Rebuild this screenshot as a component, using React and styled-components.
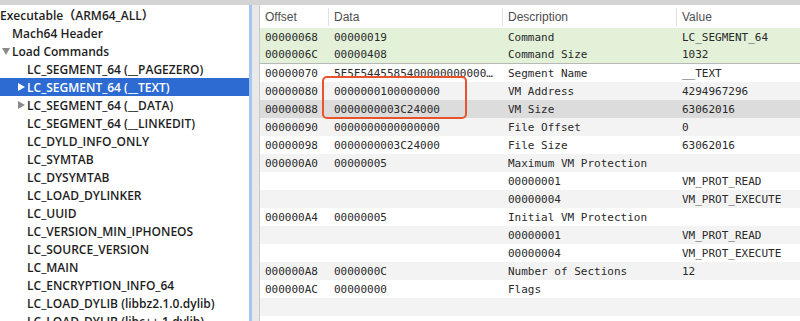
import React from 'react';
import styled, { createGlobalStyle } from 'styled-components';

const GlobalStyle = createGlobalStyle`
  html, body {
    margin: 0;
    padding: 0;
    overflow: hidden;
    background: #d4d4d4;
  }
`;

const Window = styled.div`
  width: 800px;
  height: 321px;
  padding-top: 5px;
  box-sizing: border-box;
  display: flex;
  background: #d4d4d4;
  overflow: hidden;
`;

const Sidebar = styled.div`
  width: 249px;
  flex-shrink: 0;
  background: #fff;
  border-right: 3px solid #a8c5f0;
  padding-top: 1px;
  overflow: hidden;
`;

const TreeRow = styled.div`
  height: 18px;
  display: flex;
  align-items: center;
  padding-left: ${(p) => p.$indent}px;
  background: ${(p) => (p.$selected ? '#2d6bd3' : 'transparent')};
  color: ${(p) => (p.$selected ? '#fff' : '#1e1e1e')};
  font-family: 'Open Sans', 'Noto Sans CJK SC', sans-serif;
  font-weight: 600;
  font-size: 12px;
  white-space: nowrap;
`;

const Disclosure = styled.span`
  width: 12px;
  flex-shrink: 0;
  display: flex;
  align-items: center;
  justify-content: flex-start;
  padding-left: 2px;
  box-sizing: border-box;

  &::before {
    content: '';
    display: ${(p) => (p.$dir ? 'block' : 'none')};
    width: 0;
    height: 0;
    border-style: solid;
    border-color: transparent;
    ${(p) =>
      p.$dir === 'down'
        ? `border-width: 7px 4px 0 4px; border-top-color: ${p.$light ? '#fff' : '#8a8a8a'};`
        : `border-width: 4px 0 4px 7px; border-left-color: ${p.$light ? '#fff' : '#8a8a8a'}; margin-left: 1px;`}
  }
`;

const Splitter = styled.div`
  width: 7px;
  flex-shrink: 0;
  background: #e9e9e9;
  border-right: 1px solid #c9c9c9;
`;

const Main = styled.div`
  flex: 1;
  position: relative;
  background: #fff;
  overflow: hidden;
`;

const Grid = styled.div`
  display: grid;
  grid-template-columns: 69px 174px 174px 1fr;
  height: ${(p) => p.$height}px;
  align-items: center;
  box-sizing: border-box;
  background: ${(p) => p.$bg};
  border-bottom: ${(p) => (p.$rule ? '1px solid #b8b8b8' : 'none')};
`;

const HeadCell = styled.div`
  position: relative;
  padding-left: 5px;
  font-family: 'Liberation Sans', Arial, sans-serif;
  font-size: 12px;
  color: #4d4d4d;
  height: 18px;
  line-height: 18px;
  border-left: ${(p) => (p.$first ? 'none' : '1px solid #e2e2e2')};
  margin-left: ${(p) => (p.$first ? '0' : '-1px')};
`;

const Cell = styled.div`
  padding: 0 5px;
  font-family: 'DejaVu Sans Mono', 'Liberation Mono', monospace;
  font-size: 11px;
  color: #2a2a2a;
  white-space: nowrap;
  overflow: hidden;
  text-overflow: ellipsis;
`;

const Highlight = styled.div`
  position: absolute;
  left: 62px;
  top: 71px;
  width: 145px;
  height: 43px;
  box-sizing: border-box;
  border: 2px solid #e8532c;
  border-radius: 5px;
  pointer-events: none;
`;

const tree = [
  { label: 'Executable（ARM64_ALL）', indent: 0 },
  { label: 'Mach64 Header', indent: 0, slot: true },
  { label: 'Load Commands', indent: 0, slot: true, dir: 'down' },
  { label: 'LC_SEGMENT_64 (__PAGEZERO)', indent: 15, slot: true },
  { label: 'LC_SEGMENT_64 (__TEXT)', indent: 15, slot: true, dir: 'right', selected: true },
  { label: 'LC_SEGMENT_64 (__DATA)', indent: 15, slot: true, dir: 'right' },
  { label: 'LC_SEGMENT_64 (__LINKEDIT)', indent: 15, slot: true },
  { label: 'LC_DYLD_INFO_ONLY', indent: 15, slot: true },
  { label: 'LC_SYMTAB', indent: 15, slot: true },
  { label: 'LC_DYSYMTAB', indent: 15, slot: true },
  { label: 'LC_LOAD_DYLINKER', indent: 15, slot: true },
  { label: 'LC_UUID', indent: 15, slot: true },
  { label: 'LC_VERSION_MIN_IPHONEOS', indent: 15, slot: true },
  { label: 'LC_SOURCE_VERSION', indent: 15, slot: true },
  { label: 'LC_MAIN', indent: 15, slot: true },
  { label: 'LC_ENCRYPTION_INFO_64', indent: 15, slot: true },
  { label: 'LC_LOAD_DYLIB (libbz2.1.0.dylib)', indent: 15, slot: true },
  { label: 'LC_LOAD_DYLIB (libc++.1.dylib)', indent: 15, slot: true },
];

const rows = [
  ['00000068', '00000019', 'Command', 'LC_SEGMENT_64', 'green'],
  ['0000006C', '00000408', 'Command Size', '1032', 'green'],
  ['00000070', '5F5F5445585400000000000000000000', 'Segment Name', '__TEXT'],
  ['00000080', '0000000100000000', 'VM Address', '4294967296'],
  ['00000088', '0000000003C24000', 'VM Size', '63062016', 'selected'],
  ['00000090', '0000000000000000', 'File Offset', '0'],
  ['00000098', '0000000003C24000', 'File Size', '63062016'],
  ['000000A0', '00000005', 'Maximum VM Protection', ''],
  ['', '', '00000001', 'VM_PROT_READ'],
  ['', '', '00000004', 'VM_PROT_EXECUTE'],
  ['000000A4', '00000005', 'Initial VM Protection', ''],
  ['', '', '00000001', 'VM_PROT_READ'],
  ['', '', '00000004', 'VM_PROT_EXECUTE'],
  ['000000A8', '0000000C', 'Number of Sections', '12'],
  ['000000AC', '00000000', 'Flags', ''],
  ['', '', '', ''],
];

const rowBg = (tone, i) => {
  if (tone === 'green') return '#e3f1d9';
  if (tone === 'selected') return '#dcdcdc';
  return i % 2 === 1 ? '#f3f3f3' : '#fff';
};

const App = () => (
  <>
    <GlobalStyle />
    <Window>
      <Sidebar>
        {tree.map((item) => (
          <TreeRow key={item.label} $indent={item.indent} $selected={item.selected}>
            {item.slot && <Disclosure $dir={item.dir} $light={item.selected} />}
            {item.label}
          </TreeRow>
        ))}
      </Sidebar>
      <Splitter />
      <Main>
        <Grid $height={23} $bg="#fff">
          <HeadCell $first>Offset</HeadCell>
          <HeadCell>Data</HeadCell>
          <HeadCell>Description</HeadCell>
          <HeadCell>Value</HeadCell>
        </Grid>
        {rows.map(([off, data, desc, value, tone], i) => (
          <Grid key={i} $height={18} $bg={rowBg(tone, i)} $rule={i === 1}>
            <Cell>{off}</Cell>
            <Cell>{data}</Cell>
            <Cell>{desc}</Cell>
            <Cell>{value}</Cell>
          </Grid>
        ))}
        <Highlight />
      </Main>
    </Window>
  </>
);

export default App;
